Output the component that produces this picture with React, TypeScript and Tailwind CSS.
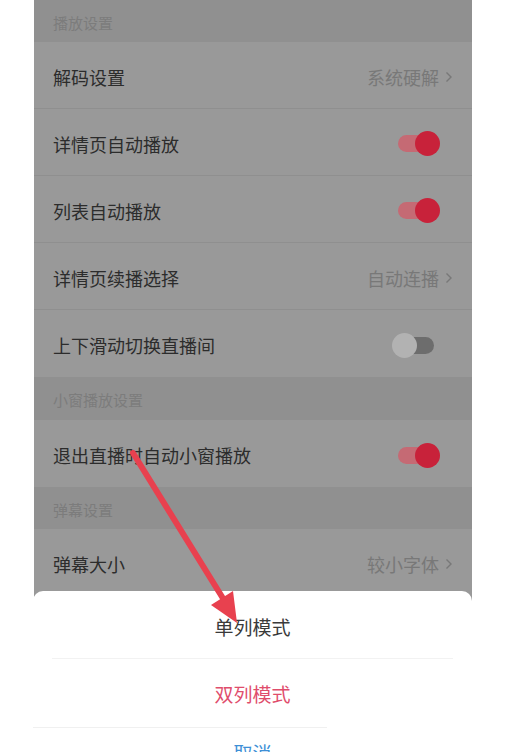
import React from 'react';

const FONT = { fontFamily: '"Noto Sans CJK SC", "Noto Sans", sans-serif' };

const Section = ({ title, h = 'h-[43px]' }: { title: string; h?: string }) => (
  <div className={`${h} bg-[#909090] flex items-center pl-[19px] pt-[2px]`}>
    <span className="text-[15px] text-[#7c7c7c] leading-none">{title}</span>
  </div>
);

const Chevron = () => (
  <svg width="8" height="12" viewBox="0 0 8 12" className="ml-[6px]">
    <polyline points="1.5,1.5 6,6 1.5,10.5" fill="none" stroke="#787878" strokeWidth="1.4" />
  </svg>
);

const Toggle = ({ on }: { on: boolean }) =>
  on ? (
    <div className="relative w-[42px] h-[25px] mr-[32px]">
      <div className="absolute left-0 top-[4px] w-[32px] h-[17px] rounded-full bg-[#c56a74]" />
      <div className="absolute right-0 top-0 w-[25px] h-[25px] rounded-full bg-[#c8223a]" />
    </div>
  ) : (
    <div className="relative w-[42px] h-[25px] mr-[38px]">
      <div className="absolute right-0 top-[4px] w-[32px] h-[17px] rounded-full bg-[#6d6d6d]" />
      <div className="absolute left-0 top-0 w-[25px] h-[25px] rounded-full bg-[#b2b2b2]" />
    </div>
  );

const Row = ({ label, value, toggle, last }: { label: string; value?: string; toggle?: boolean; last?: boolean }) => (
  <div className={`h-[67px] flex items-center justify-between pl-[19px] pt-[3px] ${last ? '' : 'border-b border-[#8f8f8f]'}`}>
    <span className="text-[18px] text-[#2c2c2c] leading-none">{label}</span>
    {value !== undefined ? (
      <div className="flex items-center pr-[19px]">
        <span className="text-[18px] text-[#787878] leading-none">{value}</span>
        <Chevron />
      </div>
    ) : (
      <Toggle on={!!toggle} />
    )}
  </div>
);

export default function App() {
  return (
    <div className="w-[523px] h-[752px] bg-white overflow-hidden relative" style={FONT}>
      <div className="ml-[34px] w-[438px] h-full bg-[#999999] relative overflow-hidden">
        <Section title="播放设置" h="h-[42px]" />
        <Row label="解码设置" value="系统硬解" />
        <Row label="详情页自动播放" toggle />
        <Row label="列表自动播放" toggle />
        <Row label="详情页续播选择" value="自动连播" />
        <Row label="上下滑动切换直播间" toggle={false} last />
        <Section title="小窗播放设置" />
        <Row label="退出直播时自动小窗播放" toggle last />
        <Section title="弹幕设置" h="h-[42px]" />
        <Row label="弹幕大小" value="较小字体" last />
      </div>

      {/* bottom action sheet */}
      <div className="absolute left-[33px] top-[591px] w-[439px] bottom-0 bg-white rounded-t-[10px] flex flex-col overflow-hidden">
        <div className="h-[67px] shrink-0 flex items-center justify-center pt-[4px]">
          <span className="text-[19px] text-[#3a3a3a] leading-none">单列模式</span>
        </div>
        <div className="mx-[19px] h-px shrink-0 bg-[#f2f2f2]" />
        <div className="h-[68px] shrink-0 flex items-center justify-center">
          <span className="text-[19px] text-[#df4d6c] leading-none">双列模式</span>
        </div>
        <div className="w-[294px] h-px shrink-0 bg-[#f0f0f0]" />
        <div className="flex justify-center pt-[15px] shrink-0">
          <span className="text-[19px] text-[#3e8fd6] leading-none">取消</span>
        </div>
      </div>

      {/* annotation arrow */}
      <svg className="absolute left-0 top-0 pointer-events-none" width="523" height="752" viewBox="0 0 523 752">
        <line x1="133" y1="453" x2="224" y2="600" stroke="#e8414f" strokeWidth="6" strokeLinecap="round" />
        <polygon points="237,623 233,591 211,605" fill="#e8414f" />
      </svg>
    </div>
  );
}
